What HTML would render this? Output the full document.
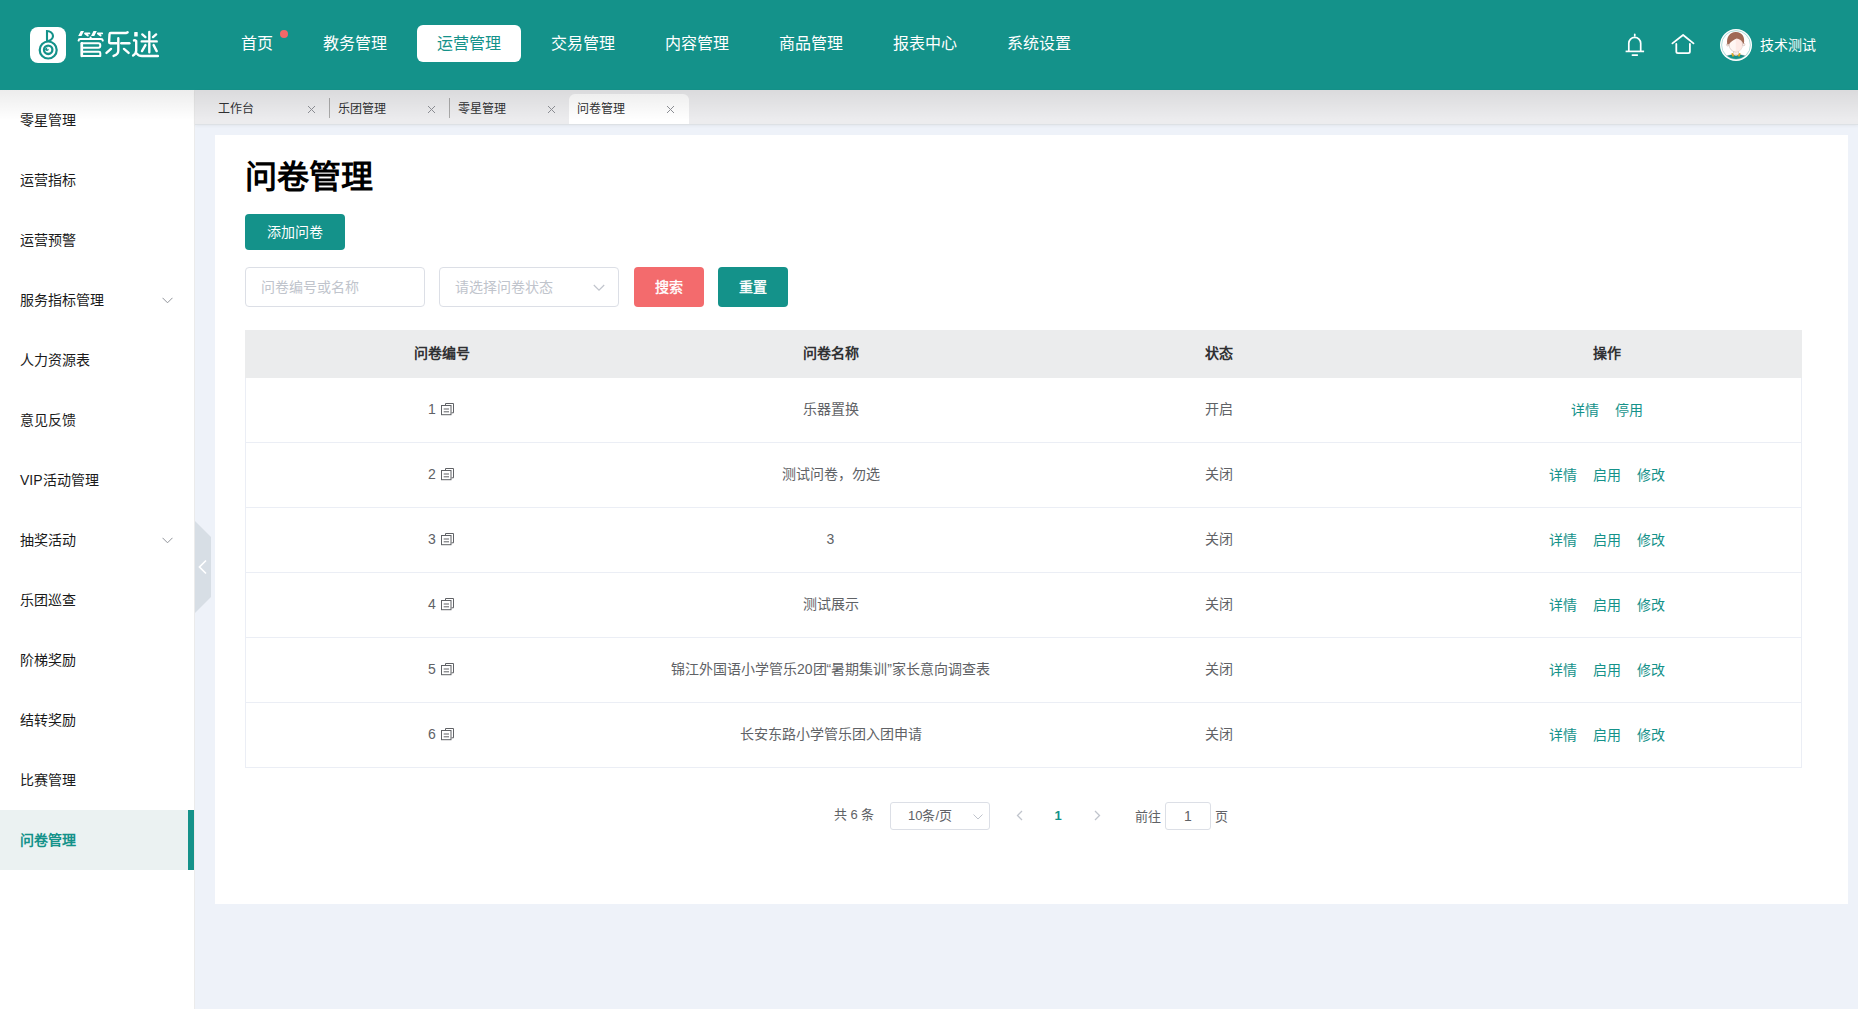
<!DOCTYPE html>
<html lang="zh-CN"><head><meta charset="utf-8">
<style>
*{box-sizing:border-box;margin:0;padding:0}
html,body{width:1858px;height:1009px;overflow:hidden;background:#eef2f9;font-family:"Liberation Sans",sans-serif}
.abs{position:absolute}
#hdr{position:absolute;left:0;top:0;width:1858px;height:90px;background:#14928a}
.logo-box{position:absolute;left:30px;top:27px;width:36px;height:36px;border-radius:8px;background:#fff}
.logo-txt{position:absolute;left:77px;top:24px;font-size:27px;line-height:40px;color:#fff;letter-spacing:0px;-webkit-text-stroke:0.7px #fff}
.nav{position:absolute;top:25px;height:37px;line-height:37px;font-size:16px;color:#fff;padding:0 20px;border-radius:6px;white-space:nowrap}
.nav.on{background:#fff;color:#14928a}
.dot{position:absolute;left:280px;top:30px;width:8px;height:8px;border-radius:50%;background:#f26868}
#side{position:absolute;left:0;top:90px;width:195px;height:919px;background:#fff;border-right:1px solid #ebebeb}
.si{position:absolute;left:0;width:194px;height:60px;line-height:60px;padding-left:20px;font-size:14px;color:#1a1a1a}
.si.on{background:#ebf2f2;color:#14928a;font-weight:bold}
.si.on:after{content:"";position:absolute;right:0;top:0;width:6px;height:60px;background:#14928a}
.chev{position:absolute;left:162px;top:27px}
#tabs{position:absolute;left:195px;top:90px;width:1663px;height:35px;background:#ececee;border-bottom:1px solid #dde1e5;box-shadow:0 1px 3px rgba(0,0,0,0.05)}
.tab{position:absolute;top:4px;width:120px;height:30px;font-size:12px;color:#303133;line-height:30px;padding-left:8px}
.tab.on{background:#fff;border-radius:6px 6px 0 0}
.tab .x{position:absolute;left:97px;top:11px}
.sep{position:absolute;top:8px;width:1px;height:20px;background:#a9a9a9}
#shadow{position:absolute;left:0;top:90px;width:1858px;height:30px;background:linear-gradient(rgba(0,0,0,0.075),rgba(0,0,0,0));pointer-events:none}
#card{position:absolute;left:215px;top:135px;width:1633px;height:769px;background:#fff}
.title{position:absolute;left:245px;top:153px;font-size:32px;line-height:48px;font-weight:bold;color:#000}
.btn{position:absolute;height:36px;line-height:36px;text-align:center;color:#fff;font-size:14px;border-radius:4px;background:#14928a}
.inp{position:absolute;top:267px;width:180px;height:40px;border:1px solid #dcdfe6;border-radius:4px;font-size:14px;color:#c0c4cc;line-height:38px;padding-left:15px}
#tbl{position:absolute;left:245px;top:330px;width:1557px;height:438px;border:1px solid #ebeef5;border-top:none}
.th{position:absolute;left:245px;top:330px;width:1557px;height:48px;background:#ebeced}
.cell{position:absolute;width:389px;text-align:center;font-size:14px;color:#606266}
.hcell{position:absolute;width:389px;text-align:center;font-size:14px;color:#303133;font-weight:bold;top:329px;line-height:48px}
.rline{position:absolute;left:245px;width:1557px;height:1px;background:#ebeef5}
.lk{color:#14928a;margin:0 8px}
.pg{position:absolute;font-size:13px;color:#606266}
</style></head><body>
<div id="hdr">
  <div class="logo-box">
    <svg width="36" height="36" viewBox="0 0 36 36" style="position:absolute;left:0;top:0">
      <g fill="none" stroke="#14928a">
        <circle cx="18.2" cy="23" r="8.5" stroke-width="2.2"/>
        <circle cx="18.2" cy="22.8" r="4.2" stroke-width="2.3"/>
        <path d="M17,14 V4 A6,5 0 0 1 17,14" stroke-width="2.1"/>
      </g>
      <g fill="#14928a"><circle cx="17" cy="22.2" r="1.8"/></g><g fill="#fff"><circle cx="18" cy="21.5" r="0.95"/></g><g>
      </g>
    </svg>
  </div>
  <svg class="abs" style="left:70px;top:25px" width="95" height="40" viewBox="0 0 95 40">
    <g fill="#fff">
      <path d="M10.8,6.1 H14 L11.5,10.9 H8.2 Z M23.5,6.1 H26.8 L24.3,10.9 H21 Z"/>
      <rect x="64.2" y="6.9" width="3.5" height="4.7" rx="0.7"/>
    </g>
    <g fill="none" stroke="#fff" stroke-width="2.4" stroke-linecap="round" stroke-linejoin="round">
      <path d="M15,8.4 H19.4 M15.6,9 L17.8,10.6" stroke-width="1.8"/>
      <path d="M27.8,8.4 H32.2 M28.4,9 L30.6,10.6" stroke-width="1.8"/>
      <path d="M8.6,15.6 Q8.8,14 10.4,14 H31 Q32.6,14 32.8,15.6" stroke-width="2"/>
      <path d="M20.6,12.6 V14" stroke-width="2"/>
      <path d="M11.8,18.2 V31.1 H30.3 V28 Q30.3,26.8 29,26.8 H13.3" stroke-width="2"/>
      <path d="M11.8,18.2 H28.3 Q30.3,18.2 30.3,20.4 Q30.3,22.7 28.3,22.7 H13.3" stroke-width="2"/>
      <path d="M11.8,18.2 V31" stroke-width="2.6"/>
      <path d="M57.6,7.3 Q56,8.05 54.6,8.05 H40.8 Q39.6,8.05 39.5,9.4 L39.1,17 Q39.1,18.2 40.2,18.2 H46.6"/>
      <path d="M51.3,18.3 H59.4"/>
      <path d="M48.3,13.2 V25.4 Q48.3,29.4 43.6,30.9"/>
      <path d="M41,23.9 L36.5,27.9 M54,23.9 L58.6,27.9"/>
      <path d="M64,15.4 Q65.2,15 66.2,16.1 V25.6 Q66.2,28.6 63.1,30.6 M66.8,28.6 Q68.6,31 72,31 H87.9"/>
      <path d="M79.3,6.9 V14.5 M79.3,18.5 V27.3 M71.7,16.4 H86.7 M72.3,9.4 L75.4,12.1 M86.1,9.4 L83,12.1 M75.4,20.1 L72,26.1 M83.6,20.1 L86.7,26.1"/>
    </g>
  </svg>
  <div class="nav" style="left:221px">首页</div>
  <div class="dot"></div>
  <div class="nav" style="left:303px">教务管理</div>
  <div class="nav on" style="left:417px">运营管理</div>
  <div class="nav" style="left:531px">交易管理</div>
  <div class="nav" style="left:645px">内容管理</div>
  <div class="nav" style="left:759px">商品管理</div>
  <div class="nav" style="left:873px">报表中心</div>
  <div class="nav" style="left:987px">系统设置</div>
  <svg class="abs" style="left:1624px;top:31.5px" width="22" height="25" viewBox="0 0 22 25">
    <g fill="none" stroke="#fff" stroke-width="1.7" stroke-linecap="round">
      <path d="M10.75,2.4 V3.8"/>
      <path d="M4.8,19.2 V11.25 A5.95,5.95 0 0 1 16.7,11.25 V19.2"/>
      <path d="M1.6,19.4 H20.1" stroke-linecap="butt"/>
      <path d="M8.4,23.1 H13.3"/>
    </g>
  </svg>
  <svg class="abs" style="left:1670px;top:33px" width="26" height="22" viewBox="0 0 26 22">
    <g fill="none" stroke="#fff" stroke-width="1.8" stroke-linejoin="round" stroke-linecap="round">
      <path d="M2.4,10.4 L13.1,2 L23.5,10.4"/>
      <path d="M6.3,10.9 V18.5 Q6.3,20.1 7.9,20.1 H18.3 Q19.9,20.1 19.9,18.5 V10.9"/>
    </g>
  </svg>
  <svg class="abs" style="left:1719px;top:28px" width="34" height="34" viewBox="0 0 34 34">
    <defs><clipPath id="ac"><circle cx="17" cy="17" r="14"/></clipPath></defs>
    <circle cx="17" cy="17" r="16" fill="#fff"/>
    <circle cx="17" cy="17" r="14.4" fill="none" stroke="#7cc4be" stroke-width="0.6"/>
    <g clip-path="url(#ac)">
      <path d="M5,34 L5,29 Q9,27.2 13.5,26.6 L17,28 L20.5,26.6 Q25,27.2 29,29 L29,34 Z" fill="#14928a" stroke="#5a4a50" stroke-width="0.3"/>
      <rect x="14.5" y="22.5" width="5" height="4.5" fill="#fbeee9" stroke="#9a7a70" stroke-width="0.3"/>
      <path d="M13,25 L15,27.8 L13.6,28.2 Z M21,25 L19,27.8 L20.4,28.2 Z" fill="#e0a81c" stroke="#e0a81c" stroke-width="0.8"/>
      <circle cx="8.8" cy="16.8" r="1.3" fill="#fbeee9" stroke="#9a7a70" stroke-width="0.3"/>
      <circle cx="24.6" cy="16.5" r="1.3" fill="#fbeee9" stroke="#9a7a70" stroke-width="0.3"/>
      <ellipse cx="16.8" cy="17" rx="6.6" ry="7" fill="#fff6f3" stroke="#9a7a70" stroke-width="0.3"/>
      <path d="M16.8,10 Q23.4,10 23.4,17 Q23.4,24 16.8,24 Z" fill="#fde6e0" opacity="0.7"/>
      <path d="M8.3,16.6 C7,9 11,4 16.8,4.1 C23,4 26.2,9 24.9,15.6 L24,15.4 C23,13 21.5,11 17.6,10.4 C15,11.5 12,13.5 10.1,15.9 Z" fill="#a06a55"/>
    </g>
  </svg>
  <div class="abs" style="left:1760px;top:35px;font-size:14px;line-height:20px;color:#fff">技术测试</div>
</div>
<div id="side">
  <div class="si" style="top:0">零星管理</div>
  <div class="si" style="top:60px">运营指标</div>
  <div class="si" style="top:120px">运营预警</div>
  <div class="si" style="top:180px">服务指标管理<svg class="chev" width="11" height="7" viewBox="0 0 11 7"><path d="M0.5,0.8 L5.5,5.8 L10.5,0.8" fill="none" stroke="#909399" stroke-width="1"/></svg></div>
  <div class="si" style="top:240px">人力资源表</div>
  <div class="si" style="top:300px">意见反馈</div>
  <div class="si" style="top:360px">VIP活动管理</div>
  <div class="si" style="top:420px">抽奖活动<svg class="chev" width="11" height="7" viewBox="0 0 11 7"><path d="M0.5,0.8 L5.5,5.8 L10.5,0.8" fill="none" stroke="#909399" stroke-width="1"/></svg></div>
  <div class="si" style="top:480px">乐团巡查</div>
  <div class="si" style="top:540px">阶梯奖励</div>
  <div class="si" style="top:600px">结转奖励</div>
  <div class="si" style="top:660px">比赛管理</div>
  <div class="si on" style="top:720px">问卷管理</div>
</div>
<svg class="abs" style="left:195px;top:521px" width="16" height="92" viewBox="0 0 16 92">
  <path d="M0,0 L16,16 L16,76 L0,92 Z" fill="#d7dee5"/>
  <path d="M11,39.5 L4.5,46 L11,52.5" fill="none" stroke="#fff" stroke-width="1.7"/>
</svg>
<div id="tabs">
  <div class="tab" style="left:15px">工作台<svg class="x" width="9" height="9" viewBox="0 0 9 9"><path d="M1,1 L8,8 M8,1 L1,8" stroke="#8e9096" stroke-width="1"/></svg></div>
  <div class="sep" style="left:134px"></div>
  <div class="tab" style="left:135px">乐团管理<svg class="x" width="9" height="9" viewBox="0 0 9 9"><path d="M1,1 L8,8 M8,1 L1,8" stroke="#8e9096" stroke-width="1"/></svg></div>
  <div class="sep" style="left:254px"></div>
  <div class="tab" style="left:255px">零星管理<svg class="x" width="9" height="9" viewBox="0 0 9 9"><path d="M1,1 L8,8 M8,1 L1,8" stroke="#8e9096" stroke-width="1"/></svg></div>
  <div class="tab on" style="left:374px">问卷管理<svg class="x" width="9" height="9" viewBox="0 0 9 9"><path d="M1,1 L8,8 M8,1 L1,8" stroke="#8e9096" stroke-width="1"/></svg></div>
</div>
<div id="shadow"></div>
<div id="card"></div>
<div class="title">问卷管理</div>
<div class="btn" style="left:245px;top:214px;width:100px">添加问卷</div>
<div class="inp" style="left:245px">问卷编号或名称</div>
<div class="inp" style="left:439px">请选择问卷状态<svg class="abs" style="left:153px;top:16px" width="12" height="8" viewBox="0 0 12 8"><path d="M0.8,1 L6,6.2 L11.2,1" fill="none" stroke="#c0c4cc" stroke-width="1.2"/></svg></div>
<div class="btn" style="left:634px;top:267px;width:70px;height:40px;line-height:40px;background:#f36b6d;-webkit-text-stroke:0.4px #fff">搜索</div>
<div class="btn" style="left:718px;top:267px;width:70px;height:40px;line-height:40px;-webkit-text-stroke:0.4px #fff">重置</div>
<div id="tbl"></div>
<div class="th"></div>
<div class="hcell" style="left:247px">问卷编号</div>
<div class="hcell" style="left:636px">问卷名称</div>
<div class="hcell" style="left:1024px">状态</div>
<div class="hcell" style="left:1412.5px">操作</div>
<div class="cell" style="left:247px;top:377px;line-height:64px">1<svg style="display:inline-block;vertical-align:-2px;margin-left:4px" width="15" height="14" viewBox="0 0 15 14"><g fill="none" stroke="#606266" stroke-width="1"><path d="M5.5,3.2 V1.5 H13.5 V10.8 H11.5"/><rect x="1.5" y="3.5" width="9.5" height="9.2" fill="#fff"/><path d="M3.7,7 H9 M3.7,9.8 H9"/></g></svg></div>
<div class="cell" style="left:636px;top:377px;line-height:64px">乐器置换</div>
<div class="cell" style="left:1024px;top:377px;line-height:64px">开启</div>
<div class="cell" style="left:1412.5px;top:378px;line-height:64px"><span class="lk">详情</span><span class="lk">停用</span></div>
<div class="rline" style="top:442px"></div>
<div class="cell" style="left:247px;top:442px;line-height:64px">2<svg style="display:inline-block;vertical-align:-2px;margin-left:4px" width="15" height="14" viewBox="0 0 15 14"><g fill="none" stroke="#606266" stroke-width="1"><path d="M5.5,3.2 V1.5 H13.5 V10.8 H11.5"/><rect x="1.5" y="3.5" width="9.5" height="9.2" fill="#fff"/><path d="M3.7,7 H9 M3.7,9.8 H9"/></g></svg></div>
<div class="cell" style="left:636px;top:442px;line-height:64px">测试问卷，勿选</div>
<div class="cell" style="left:1024px;top:442px;line-height:64px">关闭</div>
<div class="cell" style="left:1412.5px;top:443px;line-height:64px"><span class="lk">详情</span><span class="lk">启用</span><span class="lk">修改</span></div>
<div class="rline" style="top:507px"></div>
<div class="cell" style="left:247px;top:507px;line-height:64px">3<svg style="display:inline-block;vertical-align:-2px;margin-left:4px" width="15" height="14" viewBox="0 0 15 14"><g fill="none" stroke="#606266" stroke-width="1"><path d="M5.5,3.2 V1.5 H13.5 V10.8 H11.5"/><rect x="1.5" y="3.5" width="9.5" height="9.2" fill="#fff"/><path d="M3.7,7 H9 M3.7,9.8 H9"/></g></svg></div>
<div class="cell" style="left:636px;top:507px;line-height:64px">3</div>
<div class="cell" style="left:1024px;top:507px;line-height:64px">关闭</div>
<div class="cell" style="left:1412.5px;top:508px;line-height:64px"><span class="lk">详情</span><span class="lk">启用</span><span class="lk">修改</span></div>
<div class="rline" style="top:572px"></div>
<div class="cell" style="left:247px;top:572px;line-height:64px">4<svg style="display:inline-block;vertical-align:-2px;margin-left:4px" width="15" height="14" viewBox="0 0 15 14"><g fill="none" stroke="#606266" stroke-width="1"><path d="M5.5,3.2 V1.5 H13.5 V10.8 H11.5"/><rect x="1.5" y="3.5" width="9.5" height="9.2" fill="#fff"/><path d="M3.7,7 H9 M3.7,9.8 H9"/></g></svg></div>
<div class="cell" style="left:636px;top:572px;line-height:64px">测试展示</div>
<div class="cell" style="left:1024px;top:572px;line-height:64px">关闭</div>
<div class="cell" style="left:1412.5px;top:573px;line-height:64px"><span class="lk">详情</span><span class="lk">启用</span><span class="lk">修改</span></div>
<div class="rline" style="top:637px"></div>
<div class="cell" style="left:247px;top:637px;line-height:64px">5<svg style="display:inline-block;vertical-align:-2px;margin-left:4px" width="15" height="14" viewBox="0 0 15 14"><g fill="none" stroke="#606266" stroke-width="1"><path d="M5.5,3.2 V1.5 H13.5 V10.8 H11.5"/><rect x="1.5" y="3.5" width="9.5" height="9.2" fill="#fff"/><path d="M3.7,7 H9 M3.7,9.8 H9"/></g></svg></div>
<div class="cell" style="left:636px;top:637px;line-height:64px">锦江外国语小学管乐20团“暑期集训”家长意向调查表</div>
<div class="cell" style="left:1024px;top:637px;line-height:64px">关闭</div>
<div class="cell" style="left:1412.5px;top:638px;line-height:64px"><span class="lk">详情</span><span class="lk">启用</span><span class="lk">修改</span></div>
<div class="rline" style="top:702px"></div>
<div class="cell" style="left:247px;top:702px;line-height:64px">6<svg style="display:inline-block;vertical-align:-2px;margin-left:4px" width="15" height="14" viewBox="0 0 15 14"><g fill="none" stroke="#606266" stroke-width="1"><path d="M5.5,3.2 V1.5 H13.5 V10.8 H11.5"/><rect x="1.5" y="3.5" width="9.5" height="9.2" fill="#fff"/><path d="M3.7,7 H9 M3.7,9.8 H9"/></g></svg></div>
<div class="cell" style="left:636px;top:702px;line-height:64px">长安东路小学管乐团入团申请</div>
<div class="cell" style="left:1024px;top:702px;line-height:64px">关闭</div>
<div class="cell" style="left:1412.5px;top:703px;line-height:64px"><span class="lk">详情</span><span class="lk">启用</span><span class="lk">修改</span></div>
<div class="rline" style="top:767px"></div>
<div class="pg" style="left:834px;top:806px;line-height:18px">共 6 条</div>
<div class="abs" style="left:890px;top:802px;width:100px;height:28px;border:1px solid #dcdfe6;border-radius:3px;font-size:13px;color:#606266;line-height:26px;padding-left:17px">10条/页<svg class="abs" style="left:82px;top:11px" width="10" height="6" viewBox="0 0 10 6"><path d="M0.5,0.5 L5,5 L9.5,0.5" fill="none" stroke="#c0c4cc" stroke-width="1"/></svg></div>
<svg class="abs" style="left:1015px;top:810px" width="9" height="11" viewBox="0 0 9 11"><path d="M7,1 L2.5,5.5 L7,10" fill="none" stroke="#c0c4cc" stroke-width="1.3"/></svg>
<div class="pg" style="left:1050px;top:806.5px;width:16px;text-align:center;color:#14928a;font-weight:bold;line-height:18px">1</div>
<svg class="abs" style="left:1093px;top:810px" width="9" height="11" viewBox="0 0 9 11"><path d="M2,1 L6.5,5.5 L2,10" fill="none" stroke="#c0c4cc" stroke-width="1.3"/></svg>
<div class="pg" style="left:1135px;top:808px;line-height:18px">前往</div>
<div class="abs" style="left:1165px;top:802px;width:46px;height:28px;border:1px solid #dcdfe6;border-radius:3px;font-size:14px;color:#606266;line-height:27px;text-align:center">1</div>
<div class="pg" style="left:1215px;top:808px;line-height:18px">页</div>

</body></html>
